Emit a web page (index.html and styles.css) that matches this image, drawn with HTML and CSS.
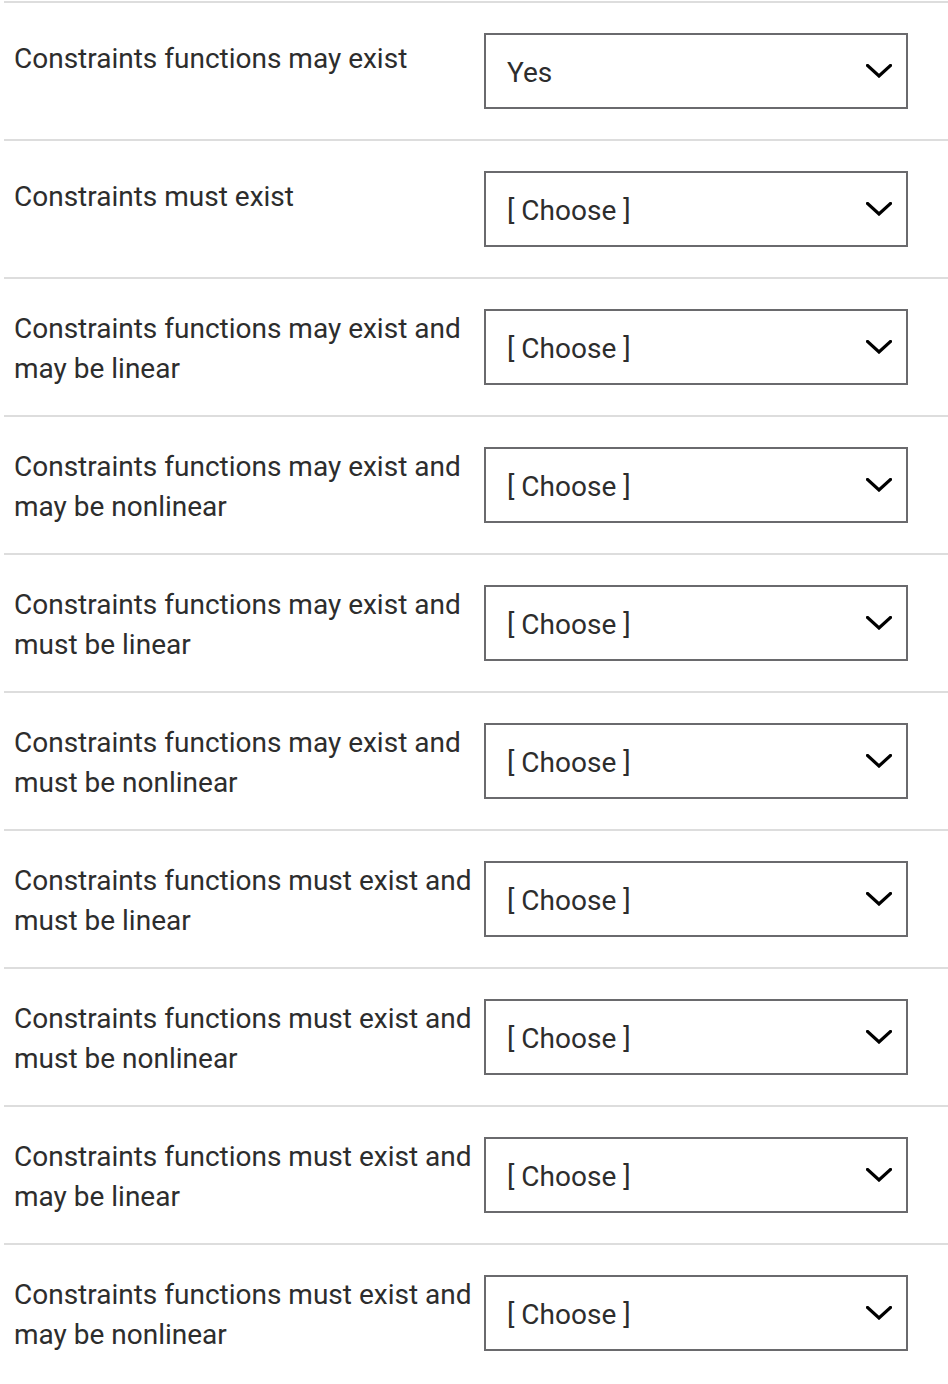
FILE: index.html
```html
<!DOCTYPE html>
<html lang="en">
<head>
<meta charset="utf-8">
<title>Constraints</title>
<link rel="stylesheet" href="styles.css">
</head>
<body>
<div class="list">
  <div class="row">
    <div class="label">Constraints functions may exist</div>
    <div class="select"><span class="value">Yes</span><svg class="chev" viewBox="0 0 26 14" width="26" height="14"><polyline points="1.5,1.5 13,12 24.5,1.5"/></svg></div>
  </div>
  <div class="row">
    <div class="label">Constraints must exist</div>
    <div class="select"><span class="value">[ Choose ]</span><svg class="chev" viewBox="0 0 26 14" width="26" height="14"><polyline points="1.5,1.5 13,12 24.5,1.5"/></svg></div>
  </div>
  <div class="row">
    <div class="label label-wrap">Constraints functions may exist and may be linear</div>
    <div class="select"><span class="value">[ Choose ]</span><svg class="chev" viewBox="0 0 26 14" width="26" height="14"><polyline points="1.5,1.5 13,12 24.5,1.5"/></svg></div>
  </div>
  <div class="row">
    <div class="label label-wrap">Constraints functions may exist and may be nonlinear</div>
    <div class="select"><span class="value">[ Choose ]</span><svg class="chev" viewBox="0 0 26 14" width="26" height="14"><polyline points="1.5,1.5 13,12 24.5,1.5"/></svg></div>
  </div>
  <div class="row">
    <div class="label label-wrap">Constraints functions may exist and must be linear</div>
    <div class="select"><span class="value">[ Choose ]</span><svg class="chev" viewBox="0 0 26 14" width="26" height="14"><polyline points="1.5,1.5 13,12 24.5,1.5"/></svg></div>
  </div>
  <div class="row">
    <div class="label label-wrap">Constraints functions may exist and must be nonlinear</div>
    <div class="select"><span class="value">[ Choose ]</span><svg class="chev" viewBox="0 0 26 14" width="26" height="14"><polyline points="1.5,1.5 13,12 24.5,1.5"/></svg></div>
  </div>
  <div class="row">
    <div class="label label-wrap">Constraints functions must exist and must be linear</div>
    <div class="select"><span class="value">[ Choose ]</span><svg class="chev" viewBox="0 0 26 14" width="26" height="14"><polyline points="1.5,1.5 13,12 24.5,1.5"/></svg></div>
  </div>
  <div class="row">
    <div class="label label-wrap">Constraints functions must exist and must be nonlinear</div>
    <div class="select"><span class="value">[ Choose ]</span><svg class="chev" viewBox="0 0 26 14" width="26" height="14"><polyline points="1.5,1.5 13,12 24.5,1.5"/></svg></div>
  </div>
  <div class="row">
    <div class="label label-wrap">Constraints functions must exist and may be linear</div>
    <div class="select"><span class="value">[ Choose ]</span><svg class="chev" viewBox="0 0 26 14" width="26" height="14"><polyline points="1.5,1.5 13,12 24.5,1.5"/></svg></div>
  </div>
  <div class="row">
    <div class="label label-wrap">Constraints functions must exist and may be nonlinear</div>
    <div class="select"><span class="value">[ Choose ]</span><svg class="chev" viewBox="0 0 26 14" width="26" height="14"><polyline points="1.5,1.5 13,12 24.5,1.5"/></svg></div>
  </div>
</div>
</body>
</html>
```

FILE: styles.css
```css
html, body {
  margin: 0;
  padding: 0;
  background: #ffffff;
}

body {
  font-family: Roboto, "Liberation Sans", Arial, sans-serif;
  font-size: 28px;
  line-height: 40px;
  color: #2d2d2d;
}

.list {
  padding: 1px 0 0 4px;
}

.row {
  box-sizing: border-box;
  height: 138px;
  display: flex;
  align-items: flex-start;
  border-top: 2px solid #dddddd;
  padding-top: 30px;
}

.label {
  box-sizing: border-box;
  flex: 0 0 480px;
  padding: 6px 6px 0 10px;
}

.label-wrap {
  padding-top: 0;
}

.select {
  box-sizing: border-box;
  flex: 0 0 424px;
  height: 76px;
  border: 2px solid #6a6a6d;
  display: flex;
  align-items: center;
  justify-content: space-between;
  padding: 0 14px 0 21px;
  background: #ffffff;
}

.value {
  color: #2d2d2d;
  padding-top: 4px;
}

.chev {
  display: block;
  fill: none;
  stroke: #000000;
  stroke-width: 3.2;
  stroke-linecap: square;
  stroke-linejoin: miter;
}
```
